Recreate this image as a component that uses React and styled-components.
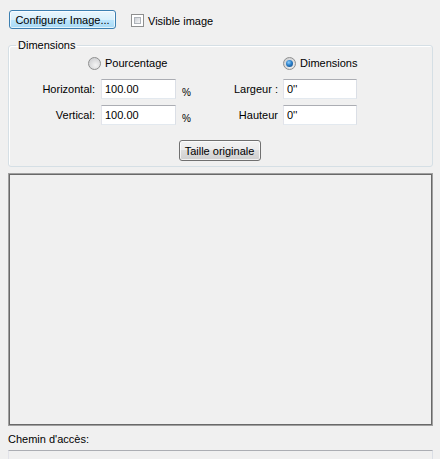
import React from 'react';
import styled, { createGlobalStyle } from 'styled-components';

const GlobalStyle = createGlobalStyle`
  html, body {
    margin: 0;
    padding: 0;
    background: #f0f0f0;
    overflow: hidden;
  }
  body {
    font-family: 'Liberation Sans', Arial, sans-serif;
    font-size: 11px;
    color: #000;
  }
`;

const Page = styled.div`
  width: 440px;
  height: 459px;
  box-sizing: border-box;
  padding: 10px 7px 0 8px;
  display: flex;
  flex-direction: column;
  overflow: hidden;

  & > * {
    flex-shrink: 0;
  }
`;

const TopBar = styled.div`
  display: flex;
  align-items: center;
  gap: 15px;
  padding-left: 1px;
  height: 19px;
`;

const Button = styled.button`
  box-sizing: border-box;
  height: ${({ $h }) => $h || 19}px;
  width: ${({ $w }) => $w}px;
  padding: 0;
  font: inherit;
  color: #000;
  border-radius: 3px;
  border: 1px solid ${({ $focus }) => ($focus ? '#3c7fb1' : '#707070')};
  background: ${({ $focus }) =>
    $focus
      ? 'linear-gradient(#eaf6fd 0%, #d9f0fc 50%, #bee6fd 50%, #a7d9f5 100%)'
      : 'linear-gradient(#f2f2f2 0%, #ebebeb 50%, #dddddd 50%, #cfcfcf 100%)'};
  box-shadow: inset 0 0 0 1px rgba(255, 255, 255, 0.7);
  text-align: center;
`;

const CheckLabel = styled.label`
  display: flex;
  align-items: center;
  gap: 4px;
  margin-top: 2px;
`;

const CheckBox = styled.span`
  box-sizing: border-box;
  width: 13px;
  height: 13px;
  border: 1px solid #8e8f8f;
  background: #fff;
  padding: 2px;
  display: block;

  &::after {
    content: '';
    display: block;
    width: 100%;
    height: 100%;
    box-sizing: border-box;
    border: 1px solid #aeb3b9;
    background: linear-gradient(135deg, #cbcfd5, #f6f6f6);
  }
`;

const Group = styled.fieldset`
  margin: 10px 0 0 0;
  padding: 0 0 5px 0;
  border: 1px solid #d5dfe5;
  border-radius: 3px;
  box-shadow: inset 1px 1px 0 #fff;
  min-width: 0;
`;

const Legend = styled.legend`
  margin-left: 7px;
  padding: 0 2px;
  line-height: 13px;
`;

const RadioRow = styled.div`
  display: grid;
  grid-template-columns: 195px 1fr;
  padding-left: 79px;
  margin-top: 4px;
  height: 14px;
  align-items: center;
`;

const RadioLabel = styled.label`
  display: flex;
  align-items: center;
  gap: 4px;
`;

const Radio = styled.span`
  box-sizing: border-box;
  width: 13px;
  height: 13px;
  border-radius: 50%;
  border: 1px solid #8e8f8f;
  background: radial-gradient(circle at 60% 65%, #f4f4f4 0%, #d3d4d6 70%);
  display: flex;
  align-items: center;
  justify-content: center;

  &::after {
    content: '';
    width: 7px;
    height: 7px;
    border-radius: 50%;
    display: ${({ $checked }) => ($checked ? 'block' : 'none')};
    background: radial-gradient(circle at 40% 35%, #8fd0ff 0%, #2a7fc9 45%, #0c3f78 100%);
  }
`;

const FieldGrid = styled.div`
  display: grid;
  grid-template-columns: 92px 75px 40px 67px 74px;
  row-gap: 6px;
  margin-top: 9px;
  align-items: center;
`;

const FieldLabel = styled.span`
  text-align: right;
  white-space: nowrap;
  padding-right: ${({ $pr }) => $pr}px;
`;

const TextBox = styled.input`
  box-sizing: border-box;
  height: 20px;
  width: 100%;
  margin: 0;
  padding: 0 3px;
  font: inherit;
  color: #000;
  background: #fff;
  border: 1px solid;
  border-color: #abadb3 #dbdfe6 #e3e9ef #e2e3ea;
  outline: none;
`;

const Unit = styled.span`
  align-self: end;
  padding-left: 6px;
  margin-bottom: 1px;
  font-size: 10px;
`;

const ButtonRow = styled.div`
  display: flex;
  justify-content: center;
  margin-top: 15px;
  padding-right: 2px;
`;

const Preview = styled.div`
  margin-top: 6px;
  height: 253px;
  box-sizing: border-box;
  border: 1px solid #a0a0a0;
  box-shadow: inset 0 0 0 1px #696969;
  background: #f0f0f0;
`;

const PathLabel = styled.div`
  margin-top: 7px;
  height: 13px;
  line-height: 13px;
`;

const PathBox = styled.div`
  margin-top: 4px;
  height: 24px;
  box-sizing: border-box;
  border: 1px solid;
  border-color: #abadb3 #dbdfe6 #e3e9ef #e2e3ea;
  background: #f0f0f0;
`;

export default function App() {
  return (
    <>
      <GlobalStyle />
      <Page>
        <TopBar>
          <Button $w={107} $focus>Configurer Image...</Button>
          <CheckLabel>
            <CheckBox />
            Visible image
          </CheckLabel>
        </TopBar>

        <Group>
          <Legend>Dimensions</Legend>
          <RadioRow>
            <RadioLabel>
              <Radio />
              Pourcentage
            </RadioLabel>
            <RadioLabel>
              <Radio $checked />
              Dimensions
            </RadioLabel>
          </RadioRow>
          <FieldGrid>
            <FieldLabel $pr={6}>Horizontal:</FieldLabel>
            <TextBox defaultValue="100.00" />
            <Unit>%</Unit>
            <FieldLabel $pr={5}>Largeur :</FieldLabel>
            <TextBox defaultValue={'0\'\''} />

            <FieldLabel $pr={6}>Vertical:</FieldLabel>
            <TextBox defaultValue="100.00" />
            <Unit>%</Unit>
            <FieldLabel $pr={5}>Hauteur</FieldLabel>
            <TextBox defaultValue={'0\'\''} />
          </FieldGrid>
          <ButtonRow>
            <Button $w={82} $h={21}>Taille originale</Button>
          </ButtonRow>
        </Group>

        <Preview />
        <PathLabel>Chemin d'accès:</PathLabel>
        <PathBox />
      </Page>
    </>
  );
}
